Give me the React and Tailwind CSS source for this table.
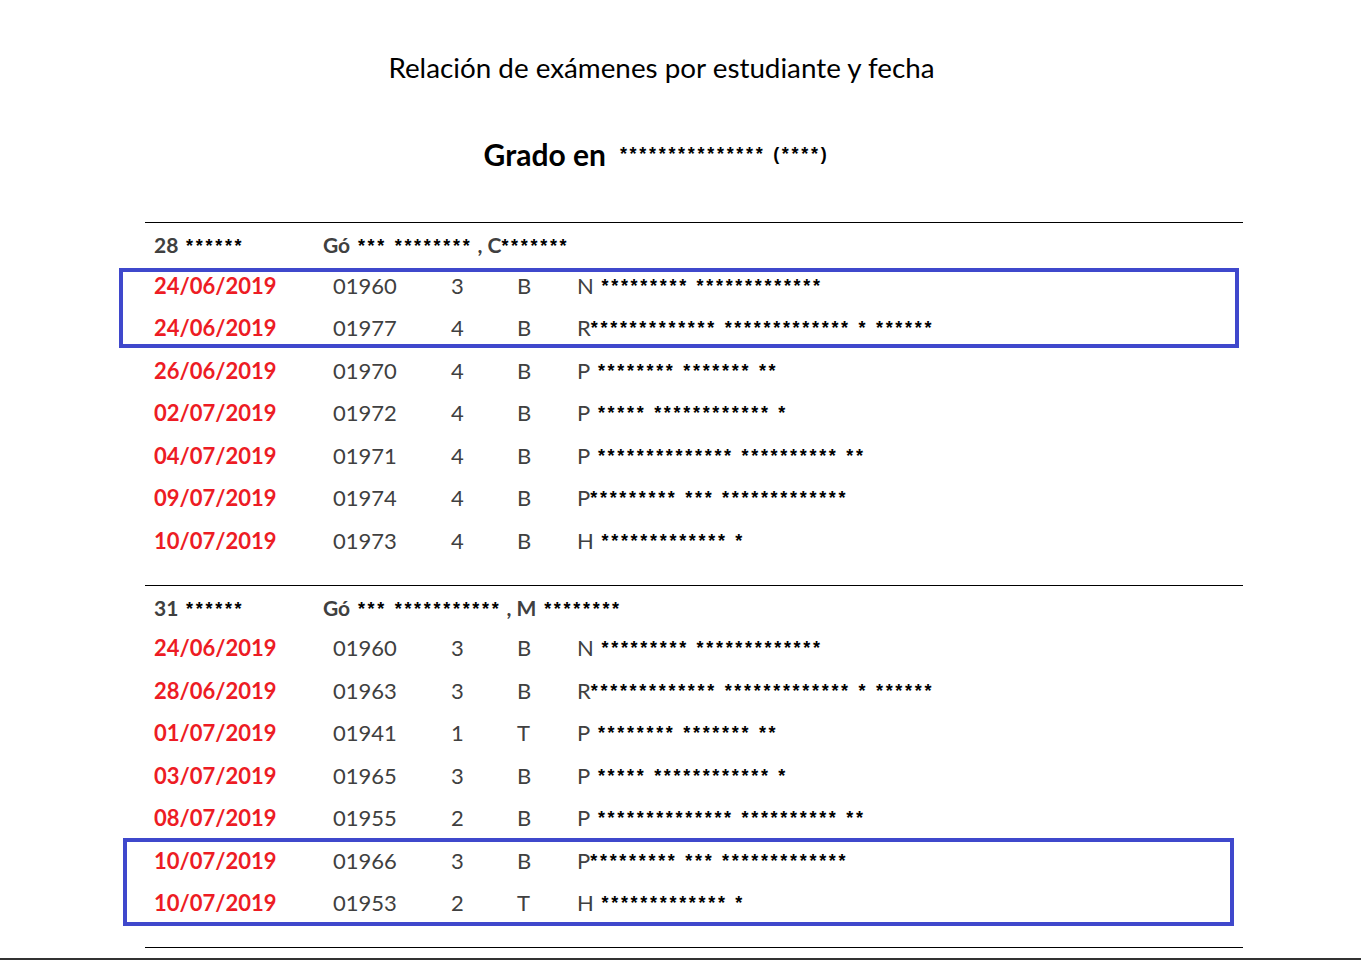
import React from 'react';

const Stars = ({ children, className = '' }) => (
  <span className={`font-['Liberation_Sans',sans-serif] text-[18px] font-bold tracking-[2.7px] text-black align-[1px] whitespace-pre ${className}`}>
    {children}
  </span>
);

const groups = [
  {
    num: '28',
    numStars: ' ******',
    surname: 'Gó',
    surnameStars: ' *** ********',
    initial: 'C',
    initialStars: '*******',
    box: { left: -26, top: 4, width: 1120, height: 80 },
    rows: [
      ['24/06/2019', '01960', '3', 'B', 'N', ' ********* *************'],
      ['24/06/2019', '01977', '4', 'B', 'R', '************* ************* * ******'],
      ['26/06/2019', '01970', '4', 'B', 'P', ' ******** ******* **'],
      ['02/07/2019', '01972', '4', 'B', 'P', ' ***** ************ *'],
      ['04/07/2019', '01971', '4', 'B', 'P', ' ************** ********** **'],
      ['09/07/2019', '01974', '4', 'B', 'P', '********* *** *************'],
      ['10/07/2019', '01973', '4', 'B', 'H', ' ************* *'],
    ],
  },
  {
    num: '31',
    numStars: ' ******',
    surname: 'Gó',
    surnameStars: ' *** ***********',
    initial: 'M',
    initialStars: ' ********',
    box: { left: -22, top: 211, width: 1111, height: 88 },
    rows: [
      ['24/06/2019', '01960', '3', 'B', 'N', ' ********* *************'],
      ['28/06/2019', '01963', '3', 'B', 'R', '************* ************* * ******'],
      ['01/07/2019', '01941', '1', 'T', 'P', ' ******** ******* **'],
      ['03/07/2019', '01965', '3', 'B', 'P', ' ***** ************ *'],
      ['08/07/2019', '01955', '2', 'B', 'P', ' ************** ********** **'],
      ['10/07/2019', '01966', '3', 'B', 'P', '********* *** *************'],
      ['10/07/2019', '01953', '2', 'T', 'H', ' ************* *'],
    ],
  },
];

const App = () => {
  return (
    <div className="flex h-[960px] flex-col bg-white font-['Lato',sans-serif] text-[#404040]">
      <h1 className="mt-[53px] pr-[38px] text-center text-[27.8px] leading-[30px] font-normal text-black">
        Relación de exámenes por estudiante y fecha
      </h1>
      <div className="mt-[53px] flex h-[36px] items-center justify-center pr-[48px]">
        <span className="text-[30px] font-bold text-black">Grado en</span>
        <Stars className="ml-[14px] align-[4px]">*************** (****)</Stars>
      </div>

      <div className="mt-[50px] ml-[145px] w-[1098px]">
        {groups.map((g) => (
          <div key={g.num} className="border-t border-black pb-[23px]">
            <div className="flex h-[41px] items-center pt-[3px] text-[21px] font-bold">
              <div className="w-[178px] pl-[9px]">
                {g.num}
                <Stars>{g.numStars}</Stars>
              </div>
              <div>
                {g.surname}
                <Stars>{g.surnameStars}</Stars>
                <span className="whitespace-pre"> , {g.initial}</span>
                <Stars>{g.initialStars}</Stars>
              </div>
            </div>
            <div className="relative">
              {g.rows.map(([date, code, n, t, initial, rest], i) => (
                <div key={i} className="flex h-[42.5px] items-center text-[22px]">
                  <div className="w-[188px] pl-[9px] font-bold text-[#ed1c24]">{date}</div>
                  <div className="w-[118px]">{code}</div>
                  <div className="w-[66px]">{n}</div>
                  <div className="w-[60px]">{t}</div>
                  <div className="whitespace-pre">
                    {initial}
                    <Stars className="align-[2px]">{rest}</Stars>
                  </div>
                </div>
              ))}
              <div
                className="pointer-events-none absolute border-4 border-[#3f48cc]"
                style={{ left: g.box.left, top: g.box.top, width: g.box.width, height: g.box.height }}
              />
            </div>
          </div>
        ))}
        <div className="border-t border-black" />
      </div>

      <div className="mt-auto h-[2px] bg-[#333333]" />
    </div>
  );
};

export default App;
